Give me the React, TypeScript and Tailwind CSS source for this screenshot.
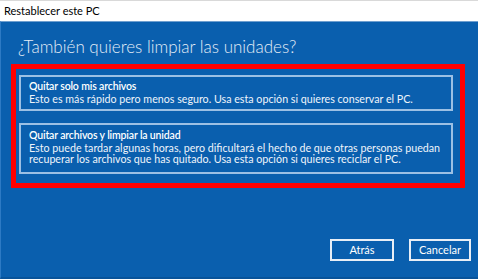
import React from "react";

function Option({ title, children, className }: { title: string; children: React.ReactNode; className?: string }) {
  return (
    <div className={`border-2 border-[#9cc0e4] pl-[8px] pr-1 ${className ?? ""}`}>
      <div className="text-[10.5px] leading-[11px] font-semibold tracking-[-0.15px] text-white whitespace-nowrap">{title}</div>
      <div className="text-[10.7px] leading-[11px] text-[#eef4fb] mt-[1px] whitespace-nowrap">{children}</div>
    </div>
  );
}

export default function App() {
  return (
    <div
      className="w-[478px] h-[279px] flex flex-col bg-[#0a5fae] overflow-hidden"
      style={{ fontFamily: 'Lato, "Open Sans", sans-serif' }}
    >
      <div className="h-[21px] shrink-0 bg-white border-t border-[#d9d9d9] flex items-center pl-[4px] text-[11px] text-black">
        Restablecer este PC
      </div>
      <div className="flex-1 flex flex-col border-t border-[#6f9fcf] border-l border-l-[#2d7ac4] border-b-2 border-b-[#08539a]">
        <h1 className="pl-[17px] pt-[14px] text-[17px] leading-[22px] font-light text-[#e4edf7]">
          ¿También quieres limpiar las unidades?
        </h1>
        <div className="ml-[10px] mt-[6px] w-[454px] h-[124px] border-[5px] border-[#ff0000] pl-[3px] pr-[7px] pt-[6px] flex flex-col gap-[12px]">
          <Option title="Quitar solo mis archivos" className="h-[36px] pt-[4px]">
            Esto es más rápido pero menos seguro. Usa esta opción si quieres conservar el PC.
          </Option>
          <Option title="Quitar archivos y limpiar la unidad" className="h-[51px] pt-[5px]">
            Esto puede tardar algunas horas, pero dificultará el hecho de que otras personas puedan
            <br />
            recuperar los archivos que has quitado. Usa esta opción si quieres reciclar el PC.
          </Option>
        </div>
        <div className="mt-auto mb-[16px] mr-[7px] flex justify-end gap-[15px]">
          <button className="w-[64px] h-[22px] border-2 border-[#e8eef6] text-[11px] text-white flex items-center justify-center">
            Atrás
          </button>
          <button className="w-[62px] h-[22px] border-2 border-[#e8eef6] text-[11px] text-white flex items-center justify-center">
            Cancelar
          </button>
        </div>
      </div>
    </div>
  );
}
